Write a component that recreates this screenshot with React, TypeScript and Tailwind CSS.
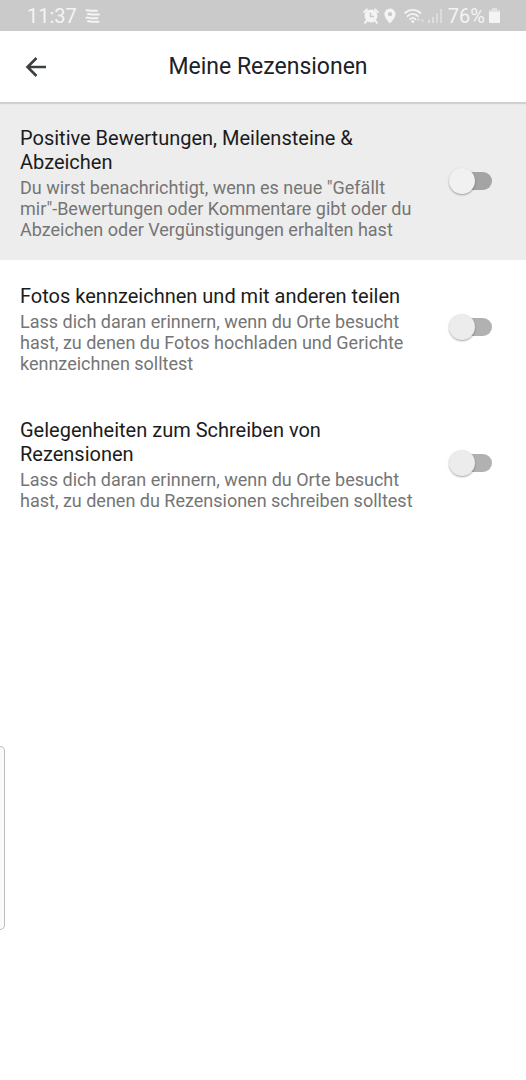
import { useState } from 'react'

type Setting = {
  id: string
  title: string
  description: string
}

const SETTINGS: Setting[] = [
  {
    id: 'ratings',
    title: 'Positive Bewertungen, Meilensteine & Abzeichen',
    description:
      'Du wirst benachrichtigt, wenn es neue "Gefällt mir"-Bewertungen oder Kommentare gibt oder du Abzeichen oder Vergünstigungen erhalten hast',
  },
  {
    id: 'photos',
    title: 'Fotos kennzeichnen und mit anderen teilen',
    description:
      'Lass dich daran erinnern, wenn du Orte besucht hast, zu denen du Fotos hochladen und Gerichte kennzeichnen solltest',
  },
  {
    id: 'reviews',
    title: 'Gelegenheiten zum Schreiben von Rezensionen',
    description:
      'Lass dich daran erinnern, wenn du Orte besucht hast, zu denen du Rezensionen schreiben solltest',
  },
]

// ── status bar ───────────────────────────────────────────────────

function NotificationIcon() {
  return (
    <svg width="15" height="14" viewBox="0 0 15 14" fill="none" stroke="currentColor" strokeWidth="2" strokeLinecap="round">
      <path d="M1.500 1.300c2-.4 3 .6 5.500.5H12" />
      <path d="M3 5c2-.4 3 .6 5.500.5H14" />
      <path d="M1.500 8.700c2-.4 3 .6 5.500.5h5.500" />
      <path d="M3 12.300c2-.4 3 .6 5.500.5H13.500" />
    </svg>
  )
}

function AlarmIcon() {
  return (
    <svg width="16" height="16" viewBox="0 0 16 16">
      <circle cx="8" cy="8" r="6.400" fill="currentColor" />
      <path d="M1.200 4 4 1.500M14.800 4 12 1.500M3.600 12.800 2 14.800M12.400 12.800 14 14.800" stroke="currentColor" strokeWidth="2" strokeLinecap="round" />
      <path d="M7.500 4.500V8.500H11" fill="none" stroke="#cacaca" strokeWidth="1.400" />
    </svg>
  )
}

function PinIcon() {
  return (
    <svg width="12" height="16" viewBox="0 0 12 16" fill="currentColor">
      <path fillRule="evenodd" d="M6 .5A5.600 5.600 0 0 0 .4 6.100C.4 10 6 15.500 6 15.500S11.600 10 11.600 6.100A5.600 5.600 0 0 0 6 .5Zm0 3.400a2.200 2.200 0 1 1 0 4.400 2.200 2.200 0 0 1 0-4.400Z" />
    </svg>
  )
}

function WifiIcon() {
  return (
    <svg width="21" height="16" viewBox="0 0 21 16">
      <g fill="none" stroke="currentColor" strokeWidth="1.800" strokeLinecap="round">
        <path d="M1 5C5.500.8 12 .8 16.500 5" />
        <path d="M3.500 8.200c3-3 7.500-3 10.500 0" />
        <path d="M6 11.200c1.600-1.500 4-1.500 5.500 0" />
      </g>
      <circle cx="8.800" cy="13.500" r="1.500" fill="currentColor" />
      <path d="M12.500 12.500 14.500 9.500l2 3ZM16.500 11.500h4l-2 3Z" fill="currentColor" opacity=".45" />
    </svg>
  )
}

function SignalIcon() {
  return (
    <svg width="14" height="16" viewBox="0 0 14 16" fill="currentColor">
      <path d="M0 12h2v3H0zM4 9h2v6H4z" opacity=".5" />
      <path d="M8 5h2v10H8zM12 1h2v14h-2z" opacity=".4" />
    </svg>
  )
}

function BatteryIcon() {
  return (
    <svg width="11" height="15" viewBox="0 0 11 15" fill="currentColor">
      <path d="M3 0h5v2H3zM0 2h11v2H0z" opacity=".55" />
      <path d="M0 4h11v10a1 1 0 0 1-1 1H1a1 1 0 0 1-1-1z" />
    </svg>
  )
}

function StatusBar() {
  return (
    <div className="flex h-[31px] items-center justify-between bg-[#cacaca] pr-[26px] pl-[27px] text-xl leading-6 text-[#f4f4f4]">
      <div className="flex items-center gap-2">
        <span>11:37</span>
        <NotificationIcon />
      </div>
      <div className="flex items-center">
        <AlarmIcon />
        <span className="ml-[5px]"><PinIcon /></span>
        <span className="ml-2"><WifiIcon /></span>
        <span className="ml-[3px]"><SignalIcon /></span>
        <span className="ml-[6px]">76%</span>
        <span className="ml-1"><BatteryIcon /></span>
      </div>
    </div>
  )
}

// ── header ───────────────────────────────────────────────────────

function Header() {
  return (
    <header className="relative z-10 flex h-[71px] items-center bg-white pl-6 shadow-[0_2px_1px_#d0d0d0]">
      <button type="button" aria-label="Zurück" className="flex size-6 shrink-0 items-center justify-center text-[#3c4043]">
        <svg width="22" height="22" viewBox="0 0 22 22" fill="none" stroke="currentColor" strokeWidth="2.600">
          <path d="M21 11H3M11.500 2 2.500 11l9 9" />
        </svg>
      </button>
      <h1 className="flex-1 pt-px pr-[38px] text-center text-[23px] leading-8 text-[#202124]">Meine Rezensionen</h1>
    </header>
  )
}

// ── setting row ──────────────────────────────────────────────────

type SettingRowProps = {
  setting: Setting
  highlighted: boolean
  checked: boolean
  onToggle: () => void
}

function SettingRow({ setting, highlighted, checked, onToggle }: SettingRowProps) {
  return (
    <li className={highlighted ? 'bg-[#ededed]' : 'bg-white'}>
      <label htmlFor={setting.id} className="flex cursor-pointer items-center gap-7 pt-6 pr-[34px] pb-5 pl-5">
        <span className="flex flex-1 flex-col gap-[3px]">
          <span className="text-xl leading-6 text-[#1b1b1b]">{setting.title}</span>
          <span className="text-lg leading-[21px] text-[#757575]">{setting.description}</span>
        </span>
        <input
          id={setting.id}
          type="checkbox"
          role="switch"
          checked={checked}
          onChange={onToggle}
          className={`relative mb-1 h-[26px] w-[43px] shrink-0 cursor-pointer appearance-none before:absolute before:top-1 before:right-0 before:h-[18px] before:w-9 before:rounded-full after:absolute after:top-0 after:left-0 after:size-[26px] after:rounded-full after:shadow-[0_1px_2px_rgba(0,0,0,0.35)] checked:before:bg-[#8ab4f8] checked:after:left-[17px] checked:after:bg-[#1a73e8] ${
            highlighted ? 'before:bg-[#a4a4a4] after:bg-[#f1f1f1]' : 'before:bg-[#b1b1b1] after:bg-[#ececec]'
          }`}
        />
      </label>
    </li>
  )
}

// ── page ─────────────────────────────────────────────────────────

export default function App() {
  const [enabled, setEnabled] = useState<Record<string, boolean>>({})

  function toggle(id: string) {
    setEnabled((e) => ({ ...e, [id]: !e[id] }))
  }

  return (
    <div className="relative min-h-screen bg-white font-['Roboto',sans-serif]">
      <StatusBar />
      <Header />
      <main>
        <ul>
          {SETTINGS.map((s, i) => (
            <SettingRow
              key={s.id}
              setting={s}
              highlighted={i === 0}
              checked={!!enabled[s.id]}
              onToggle={() => toggle(s.id)}
            />
          ))}
        </ul>
      </main>
      {/* edge panel handle */}
      <div className="fixed top-[746px] left-0 h-[184px] w-[5px] rounded-r-[5px] border border-l-0 border-[#bdbdbd] bg-[#fafafa]" />
    </div>
  )
}
